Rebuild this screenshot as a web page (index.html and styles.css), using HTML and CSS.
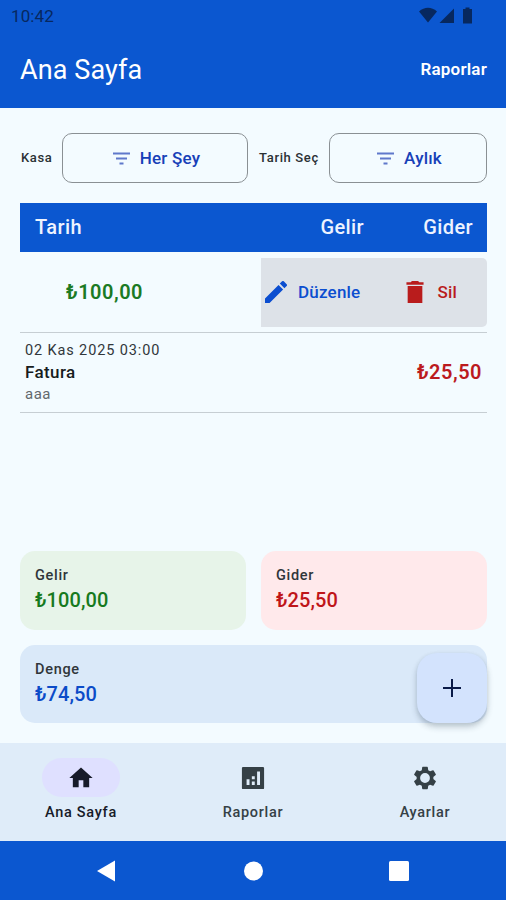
FILE: index.html
```html
<!DOCTYPE html>
<html lang="tr">
<head>
  <meta charset="utf-8">
  <title>Ana Sayfa</title>
  <link rel="stylesheet" href="styles.css">
</head>
<body>
<div class="screen">

  <div class="statusbar">
    <span class="clock">10:42</span>
    <svg class="status-icons" viewBox="0 0 54 18" width="54" height="18">
      <path d="M0 4.500C5.500-0.500 12.500-0.500 18 4.500L9 15.500z"/>
      <path d="M35 1.500V16H20.500z"/>
      <path d="M46.500 0.500h4v1.500h2.500v14.500h-9V2h2.500z"/>
    </svg>
  </div>

  <header class="appbar">
    <h1>Ana Sayfa</h1>
    <a class="appbar-link">Raporlar</a>
  </header>

  <main>
    <div class="filters">
      <span class="filter-label">Kasa</span>
      <button class="filter-btn vault">
        <svg viewBox="0 0 17 13" width="17" height="13"><path d="M0 0.500h17v2H0zM3 5.500h11v2H3zM6.500 10.500h4v2h-4z"/></svg>
        <span>Her Şey</span>
      </button>
      <span class="filter-label date">Tarih Seç</span>
      <button class="filter-btn period">
        <svg viewBox="0 0 17 13" width="17" height="13"><path d="M0 0.500h17v2H0zM3 5.500h11v2H3zM6.500 10.500h4v2h-4z"/></svg>
        <span>Aylık</span>
      </button>
    </div>

    <div class="table-head">
      <span class="th-date">Tarih</span>
      <span class="th-income">Gelir</span>
      <span class="th-expense">Gider</span>
    </div>

    <div class="row swiped">
      <span class="amount income">₺100,00</span>
      <div class="actions">
        <a class="edit">
          <svg viewBox="3 3 18 18" width="22" height="22"><path d="M3 17.250V21h3.750L17.810 9.940l-3.750-3.750L3 17.250zM20.710 7.040a1 1 0 0 0 0-1.410l-2.340-2.340a1 1 0 0 0-1.410 0l-1.830 1.830 3.750 3.750 1.830-1.830z"/></svg>
          <span>Düzenle</span>
        </a>
        <a class="delete">
          <svg viewBox="5 3 14 18" width="18" height="22"><path d="M6 21h12V7H6zM19 4h-3.500l-1-1h-5l-1 1H5v2h14V4z"/></svg>
          <span>Sil</span>
        </a>
      </div>
    </div>

    <div class="row">
      <div class="entry">
        <span class="entry-date">02 Kas 2025 03:00</span>
        <span class="entry-title">Fatura</span>
        <span class="entry-note">aaa</span>
      </div>
      <span class="amount expense">₺25,50</span>
    </div>

    <div class="summary">
      <div class="card card-income">
        <span class="card-label">Gelir</span>
        <span class="card-value">₺100,00</span>
      </div>
      <div class="card card-expense">
        <span class="card-label">Gider</span>
        <span class="card-value">₺25,50</span>
      </div>
      <div class="card card-balance">
        <span class="card-label">Denge</span>
        <span class="card-value">₺74,50</span>
        <button class="fab">
          <svg viewBox="0 0 18 18" width="18" height="18"><path d="M8 0h2v8h8v2h-8v8H8v-8H0V8h8z"/></svg>
        </button>
      </div>
    </div>
  </main>

  <nav class="tabs">
    <a class="tab active">
      <span class="tab-icon"><svg viewBox="0 0 24 24" width="28" height="28"><path d="M10 20v-6h4v6h5v-8h3L12 3 2 12h3v8z"/></svg></span>
      <span>Ana Sayfa</span>
    </a>
    <a class="tab">
      <span class="tab-icon"><svg viewBox="0 0 24 24" width="28" height="28"><path fill-rule="evenodd" d="M3.500 2.500h17a1 1 0 0 1 1 1v17a1 1 0 0 1-1 1h-17a1 1 0 0 1-1-1v-17a1 1 0 0 1 1-1zM6.500 13v5h2.500v-5zM11 15v3h2.500v-3zM11 10.500v2.500h2.500v-2.500zM15.500 6.500v11.500h2.500V6.500z"/></svg></span>
      <span>Raporlar</span>
    </a>
    <a class="tab">
      <span class="tab-icon"><svg viewBox="0 0 24 24" width="28" height="28"><path fill-rule="evenodd" d="M19.140 12.940c.04-.3.06-.61.06-.94 0-.32-.02-.64-.07-.94l2.030-1.580a.49.49 0 0 0 .12-.61l-1.920-3.320a.488.488 0 0 0-.59-.22l-2.390.96c-.5-.38-1.030-.7-1.620-.94l-.36-2.540a.484.484 0 0 0-.48-.41h-3.840c-.24 0-.43.17-.47.41l-.36 2.540c-.59.24-1.130.57-1.620.94l-2.390-.96c-.22-.08-.47 0-.59.22L2.740 8.870c-.12.21-.08.47.12.61l2.030 1.580c-.05.3-.09.63-.09.94s.02.64.07.94l-2.030 1.580a.49.49 0 0 0-.12.61l1.920 3.320c.12.22.37.29.59.22l2.390-.96c.5.38 1.030.7 1.620.94l.36 2.540c.05.24.24.41.48.41h3.840c.24 0 .44-.17.47-.41l.36-2.540c.59-.24 1.130-.56 1.620-.94l2.390.96c.22.08.47 0 .59-.22l1.920-3.320c.12-.22.07-.47-.12-.61l-2.010-1.580zM12 7.800a4.200 4.200 0 1 0 0 8.400 4.200 4.200 0 1 0 0-8.400z"/></svg></span>
      <span>Ayarlar</span>
    </a>
  </nav>

  <div class="sysnav">
    <svg viewBox="0 0 20 22" width="20" height="22"><path d="M19 0.500v21L1 11z"/></svg>
    <svg viewBox="0 0 20 22" width="20" height="22"><circle cx="10.500" cy="11" r="9.500"/></svg>
    <svg viewBox="0 0 20 22" width="20" height="22"><rect x="0" y="1" width="20" height="20" rx="1.500"/></svg>
  </div>

</div>
</body>
</html>
```

FILE: styles.css
```css
* {
  box-sizing: border-box;
}
body {
  margin: 0;
  font-family: Roboto, "Liberation Sans", sans-serif;
  color: #171c20;
}
svg {
  display: block;
  fill: currentColor;
  flex: none;
}
button {
  font: inherit;
  padding: 0;
  border: 0;
}
.screen {
  display: flex;
  flex-direction: column;
  width: 506px;
  height: 900px;
  background: #f3fbff;
}

/* top */
.statusbar {
  display: flex;
  justify-content: space-between;
  height: 31px;
  padding: 7px 33px 0 11px;
  background: #0b57d0;
  color: #07285f;
}
.clock {
  font-size: 17px;
  line-height: 18px;
  letter-spacing: 0.1px;
}
.appbar {
  display: flex;
  justify-content: space-between;
  align-items: center;
  height: 77px;
  padding: 0 19px 0 20px;
  background: #0b57d0;
  color: #fff;
}
.appbar h1 {
  margin: 0;
  font-size: 27px;
  font-weight: 400;
  letter-spacing: 0.1px;
}
.appbar-link {
  padding-bottom: 1px;
  font-size: 17px;
  font-weight: 600;
  letter-spacing: 0.2px;
}

main {
  display: flex;
  flex-direction: column;
  flex: 1;
  padding: 25px 19px 20px 20px;
}

/* filters */
.filters {
  display: flex;
  align-items: center;
  height: 50px;
  margin-bottom: 20px;
}
.filter-label {
  width: 42px;
  padding-left: 1px;
  padding-bottom: 1px;
  font-size: 13px;
  font-weight: 500;
  letter-spacing: 0.65px;
  white-space: nowrap;
  color: #2a3034;
}
.filter-label.date {
  width: 70px;
  padding-left: 0;
  margin-left: 11px;
}
.filter-btn {
  display: flex;
  align-items: center;
  justify-content: center;
  gap: 10px;
  height: 50px;
  padding-left: 3px;
  border: 1px solid #8a9094;
  border-radius: 10px;
  background: none;
  color: #1740b8;
  font-size: 17px;
  font-weight: 500;
  letter-spacing: 0.2px;
}
.filter-btn svg {
  color: #5f78cb;
}
.vault {
  width: 186px;
}
.period {
  width: 158px;
}

/* transactions */
.table-head {
  display: flex;
  align-items: center;
  height: 49px;
  padding: 0 14px 2px 15px;
  background: #0b57d0;
  color: #eef3ff;
  font-size: 20px;
  font-weight: 500;
  letter-spacing: 0.4px;
}
.th-income {
  margin-left: auto;
}
.th-expense {
  width: 109px;
  text-align: right;
}
.row {
  display: flex;
  align-items: center;
  justify-content: space-between;
  height: 80.5px;
  padding: 0 5px 0;
  border-bottom: 1px solid #c6ced3;
}
.amount {
  font-size: 20px;
  font-weight: 600;
  letter-spacing: 0.5px;
}
.income {
  color: #1b7a24;
}
.expense {
  color: #bb1a1e;
}
.swiped {
  padding: 1px 0 0 46px;
}
.actions {
  display: flex;
  align-items: center;
  width: 226px;
  height: 69px;
  padding: 0 30px 1px 4px;
  border-radius: 0 5px 5px 0;
  background: #dde2e8;
  font-size: 17px;
  font-weight: 500;
  letter-spacing: 0.2px;
}
.edit,
.delete {
  display: flex;
  align-items: center;
}
.edit {
  gap: 11px;
  color: #0b4ed0;
}
.delete {
  gap: 13px;
  margin-left: auto;
  color: #b91c1c;
}
.entry {
  display: flex;
  flex-direction: column;
}
.entry-date {
  font-size: 14.5px;
  line-height: 21px;
  letter-spacing: 0.88px;
  color: #31373b;
}
.entry-title {
  font-size: 17px;
  line-height: 23px;
  font-weight: 500;
  letter-spacing: 0.4px;
}
.entry-note {
  font-size: 15px;
  line-height: 20px;
  letter-spacing: 0.5px;
  color: #62686c;
}

/* totals */
.summary {
  display: grid;
  grid-template-columns: 1fr 1fr;
  gap: 15px;
  margin-top: auto;
}
.card {
  display: flex;
  flex-direction: column;
  height: 78.5px;
  padding: 15px;
  border-radius: 15px;
}
.card-label {
  font-size: 14.5px;
  line-height: 20px;
  font-weight: 500;
  letter-spacing: 0.7px;
  color: #30363a;
}
.card-value {
  font-size: 20px;
  line-height: 28px;
  font-weight: 500;
  letter-spacing: 0.1px;
}
.card-income {
  background: #e7f4e9;
  color: #167a1e;
}
.card-expense {
  background: #ffe9eb;
  color: #bf1519;
}
.card-balance {
  position: relative;
  grid-column: 1 / 3;
  background: #dae9f9;
  color: #0b4bc8;
}
.fab {
  position: absolute;
  right: 0;
  bottom: 0;
  display: flex;
  align-items: center;
  justify-content: center;
  width: 70px;
  height: 70px;
  border-radius: 20px;
  background: #d3e3fd;
  color: #0a1a48;
  box-shadow: 0 4px 6px rgba(30, 50, 70, 0.24), 0 1px 4px rgba(30, 50, 70, 0.08);
}

/* bottom */
.tabs {
  display: flex;
  justify-content: space-between;
  height: 98px;
  padding: 15px 42px 0;
  background: #dfecf9;
}
.tab {
  display: flex;
  flex-direction: column;
  align-items: center;
  width: 78px;
  gap: 6px;
  font-size: 14.5px;
  line-height: 20px;
  font-weight: 500;
  letter-spacing: 0.7px;
  white-space: nowrap;
  color: #354046;
}
.tab-icon {
  display: flex;
  align-items: center;
  justify-content: center;
  width: 78px;
  height: 39px;
  border-radius: 20px;
}
.active {
  color: #171b29;
}
.active .tab-icon {
  background: #dfe0ff;
}
.sysnav {
  display: flex;
  justify-content: space-between;
  align-items: center;
  height: 59px;
  padding: 0 97px 0 96px;
  background: #0b57d0;
  color: #fff;
}
```
